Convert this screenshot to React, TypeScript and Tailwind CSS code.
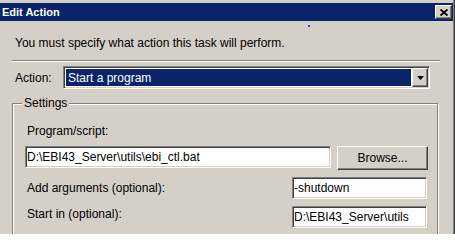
const sunken =
  "border border-t-[#808080] border-l-[#808080] border-r-white border-b-white shadow-[inset_1px_1px_0_#404040,inset_-1px_-1px_0_#d4d0c8] p-[1px]";
const raised =
  "border border-t-white border-l-white border-r-[#404040] border-b-[#404040] shadow-[inset_-1px_-1px_0_#808080] bg-[#d4d0c8]";

function TextField({ value, className }: { value: string; className: string }) {
  return (
    <div className={`${sunken} ${className} h-[22px] shrink-0 bg-white flex items-center pl-[1px] overflow-hidden whitespace-nowrap`}>
      {value}
    </div>
  );
}

export default function App() {
  return (
    <div className="w-[455px] h-[234px] overflow-hidden bg-[#d4d0c8] flex items-start font-['Liberation_Sans',Arial,sans-serif] text-[12px] leading-[14px] text-black">
      <div className="relative w-[453px] shrink-0">
        <div className="h-[3px]" />
        <div className="h-[18px] bg-[#0a246a] flex items-center justify-between pl-[2px] pr-[1px]">
          <span className="font-bold text-white text-[11px]">Edit Action</span>
          <div className={`${raised} w-[17px] h-[14px] flex items-center justify-center`}>
            <svg width="8" height="7" viewBox="0 0 8 7">
              <path d="M0.5 0.5 L7.5 6.5 M7.5 0.5 L0.5 6.5" stroke="#000" strokeWidth="1.8" />
            </svg>
          </div>
        </div>
        <div className="absolute left-[308px] top-[25px] w-[2px] h-[2px] bg-[#3344ff]" />

        <div className="pl-[12px] flex flex-col">
          <p className="mt-[15px] ml-[3px]">You must specify what action this task will perform.</p>
          <div className="mt-[10px] w-[428px] h-[2px] border-t border-t-[#808080] border-b border-b-white" />

          <div className="mt-[4px] flex items-center">
            <span className="ml-[3px] w-[48px]">Action:</span>
            <div className={`${sunken} w-[367px] h-[23px] bg-white flex`}>
              <div className="flex-1 p-[1px]">
                <div className="h-full bg-[#0a246a] text-white pl-[2px] flex items-center">Start a program</div>
              </div>
              <div className={`${raised} w-[16px] h-full flex items-center justify-center`}>
                <svg width="7" height="4" viewBox="0 0 7 4">
                  <polygon points="0,0 7,0 3.5,4" fill="#000" />
                </svg>
              </div>
            </div>
          </div>

          <div className="relative mt-[14px] w-[426px] h-[140px] shrink-0 border border-[#808080] shadow-[inset_1px_1px_0_#fff,1px_1px_0_#fff] pl-[12px] pr-[9px] flex flex-col">
            <span className="absolute -top-[8px] left-[9px] px-[2px] bg-[#d4d0c8]">Settings</span>
            <span className="mt-[20px] ml-[2px]">Program/script:</span>
            <div className="mt-[8px] flex items-start gap-[6px]">
              <TextField value="D:\EBI43_Server\utils\ebi_ctl.bat" className="w-[306px]" />
              <div className={`${raised} w-[91px] h-[24px] flex items-center justify-center`}>Browse...</div>
            </div>
            <div className="mt-[7px] flex items-center justify-between">
              <span className="ml-[2px]">Add arguments (optional):</span>
              <TextField value="-shutdown" className="w-[135px] mr-[1px]" />
            </div>
            <div className="mt-[7px] flex items-start justify-between">
              <span className="ml-[2px] mt-[1px]">Start in (optional):</span>
              <TextField value="D:\EBI43_Server\utils" className="w-[135px] mr-[1px]" />
            </div>
          </div>
        </div>
      </div>
      <div className="w-px h-full bg-[#808080]" />
      <div className="w-px h-full bg-[#404040]" />
    </div>
  );
}
